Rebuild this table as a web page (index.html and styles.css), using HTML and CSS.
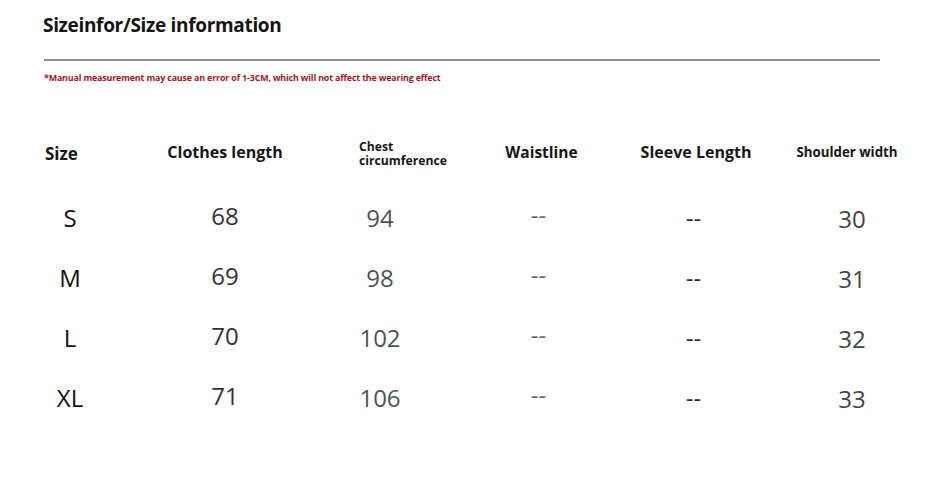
FILE: index.html
```html
<!DOCTYPE html>
<html lang="en">
<head>
<meta charset="utf-8">
<title>Size information</title>
<link rel="stylesheet" href="styles.css">
</head>
<body>
<div class="page">
  <header class="head">
    <h1 class="title">Sizeinfor/Size information</h1>
    <hr class="rule">
    <p class="note">*Manual measurement may cause an error of 1-3CM, which will not affect the wearing effect</p>
  </header>
  <div class="table">
    <div class="row hrow">
      <div class="cell h-size">Size</div>
      <div class="cell h-len">Clothes length</div>
      <div class="cell h-chest"><span class="ln">Chest</span><span class="ln">circumference</span></div>
      <div class="cell h-waist">Waistline</div>
      <div class="cell h-sleeve">Sleeve Length</div>
      <div class="cell h-shoulder">Shoulder width</div>
    </div>
    <div class="row drow">
      <div class="cell c-size">S</div>
      <div class="cell c-len">68</div>
      <div class="cell c-chest">94</div>
      <div class="cell c-waist">--</div>
      <div class="cell c-sleeve">--</div>
      <div class="cell c-shoulder">30</div>
    </div>
    <div class="row drow">
      <div class="cell c-size">M</div>
      <div class="cell c-len">69</div>
      <div class="cell c-chest">98</div>
      <div class="cell c-waist">--</div>
      <div class="cell c-sleeve">--</div>
      <div class="cell c-shoulder">31</div>
    </div>
    <div class="row drow">
      <div class="cell c-size">L</div>
      <div class="cell c-len">70</div>
      <div class="cell c-chest">102</div>
      <div class="cell c-waist">--</div>
      <div class="cell c-sleeve">--</div>
      <div class="cell c-shoulder">32</div>
    </div>
    <div class="row drow">
      <div class="cell c-size">XL</div>
      <div class="cell c-len">71</div>
      <div class="cell c-chest">106</div>
      <div class="cell c-waist">--</div>
      <div class="cell c-sleeve">--</div>
      <div class="cell c-shoulder">33</div>
    </div>
  </div>
</div>
</body>
</html>
```

FILE: styles.css
```css
html, body {
  margin: 0;
  padding: 0;
  background: #ffffff;
}
.page {
  width: 928px;
  height: 485px;
  font-family: "Open Sans", "Noto Sans", sans-serif;
  color: #1a1a1a;
}
.head {
  padding: 12px 48px 0 43px;
}
.title {
  margin: 0;
  font-size: 19px;
  font-weight: 700;
  line-height: 26px;
  color: #141414;
  letter-spacing: -0.32px;
}
.rule {
  margin: 21px 0 0 1px;
  border: 0;
  height: 2px;
  background: #8e8e8e;
}
.note {
  margin: 11px 0 0 1px;
  font-size: 8.9px;
  font-weight: 700;
  line-height: 12px;
  color: #a3161e;
  letter-spacing: -0.15px;
}
.table {
  padding-top: 51px;
}
.row {
  display: grid;
  grid-template-columns: 140px 162px 156px 157px 157px 156px;
  align-items: center;
}
.hrow {
  height: 34px;
  margin-bottom: 19px;
  font-weight: 700;
  color: #161616;
}
.drow {
  height: 60px;
  font-size: 24px;
  font-weight: 400;
  line-height: 30px;
}
.cell {
  text-align: center;
}
.h-size {
  font-size: 17px;
  text-align: left;
  padding-left: 45px;
  padding-top: 3px;
}
.h-len {
  font-size: 16px;
  padding-left: 8px;
}
.h-chest {
  display: flex;
  flex-direction: column;
  font-size: 12.2px;
  text-align: left;
  line-height: 14px;
  padding-left: 57px;
  padding-top: 3px;
}
.ln {
  display: block;
  height: 14px;
}
.h-waist {
  font-size: 15.5px;
  padding-left: 10px;
}
.h-sleeve {
  font-size: 16px;
  padding-left: 5px;
}
.h-shoulder {
  font-size: 13.3px;
  padding-right: 6px;
}
.c-size {
  color: #111111;
}
.c-len {
  color: #333333;
  padding-bottom: 4px;
  padding-left: 8px;
}
.c-chest {
  color: #4f5357;
}
.c-waist {
  color: #6a6a6a;
  padding-bottom: 6px;
  padding-left: 4px;
}
.c-sleeve {
  color: #2e2e2e;
}
.c-shoulder {
  color: #454545;
  padding-top: 2px;
  padding-left: 4px;
}
```
